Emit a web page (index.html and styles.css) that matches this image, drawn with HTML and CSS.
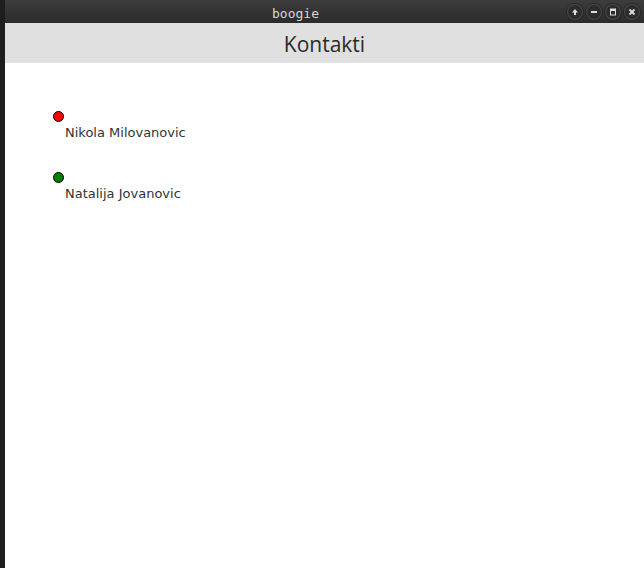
FILE: index.html
```html
<!DOCTYPE html>
<html>
<head>
<meta charset="utf-8">
<link rel="stylesheet" href="styles.css">
</head>
<body>
<div class="screen">
  <div class="side"></div>
  <div class="window">
    <div class="titlebar">
      <span class="title">boogie</span>
      <div class="controls">
        <span class="btn"><svg width="8" height="8" viewBox="0 0 8 8"><path d="M4 1 L7 4.5 H5 V7 H3 V4.5 H1 Z" fill="#ddd"/></svg></span>
        <span class="btn"><svg width="8" height="8" viewBox="0 0 8 8"><rect x="1" y="3" width="6" height="2" fill="#ddd"/></svg></span>
        <span class="btn"><svg width="8" height="8" viewBox="0 0 8 8"><rect x="1.5" y="1" width="5" height="6" fill="none" stroke="#ddd" stroke-width="1"/><rect x="1.5" y="1" width="5" height="2" fill="#ddd"/></svg></span>
        <span class="btn"><svg width="8" height="8" viewBox="0 0 8 8"><path d="M1.5 1.5 L6.5 6.5 M6.5 1.5 L1.5 6.5" stroke="#ddd" stroke-width="1.8"/></svg></span>
      </div>
    </div>
    <div class="header">Kontakti</div>
    <div class="content">
      <div class="contact">
        <span class="dot red"></span>
        <span class="name">Nikola Milovanovic</span>
      </div>
      <div class="contact">
        <span class="dot green"></span>
        <span class="name">Natalija Jovanovic</span>
      </div>
    </div>
  </div>
</div>
</body>
</html>
```

FILE: styles.css
```css
html, body {
  margin: 0;
  padding: 0;
  width: 644px;
  height: 568px;
  overflow: hidden;
}
.screen {
  display: flex;
  width: 644px;
  height: 568px;
}
.side {
  width: 5px;
  background: #1e1e1e;
  flex: none;
}
.window {
  flex: 1;
  display: flex;
  flex-direction: column;
  background: #fff;
}
.titlebar {
  height: 23px;
  background: linear-gradient(#3c3c3c, #2b2b2b);
  position: relative;
  display: flex;
  align-items: center;
  justify-content: center;
  flex: none;
}
.title {
  font-family: "DejaVu Sans Mono", monospace;
  font-size: 13px;
  color: #d8d8d8;
  margin-left: -58px;
  margin-top: 3px;
}
.controls {
  position: absolute;
  right: 4px;
  top: 4px;
  display: flex;
  gap: 3px;
}
.btn {
  width: 16px;
  height: 16px;
  border-radius: 50%;
  background: #2c2c2c;
  box-shadow: inset 0 0 0 1px #4a4a4a, 0 0 0 1px #262626;
  display: flex;
  align-items: center;
  justify-content: center;
}
.header {
  height: 40px;
  background: #e0e0e0;
  flex: none;
  display: flex;
  align-items: center;
  justify-content: center;
  font-family: "Open Sans", sans-serif;
  font-size: 21px;
  color: #2a2a2a;
  padding-top: 2px;
  box-sizing: border-box;
}
.content {
  padding: 48px 0 0 48px;
  display: flex;
  flex-direction: column;
  gap: 32px;
}
.contact {
  display: flex;
  flex-direction: column;
  align-items: flex-start;
}
.dot {
  width: 9px;
  height: 9px;
  border-radius: 50%;
  border: 1px solid #000;
}
.red { background: #ff0000; }
.green { background: #008000; }
.name {
  margin-left: 12px;
  margin-top: 3px;
  font-family: "DejaVu Sans", sans-serif;
  font-size: 13px;
  color: #333;
}
```
